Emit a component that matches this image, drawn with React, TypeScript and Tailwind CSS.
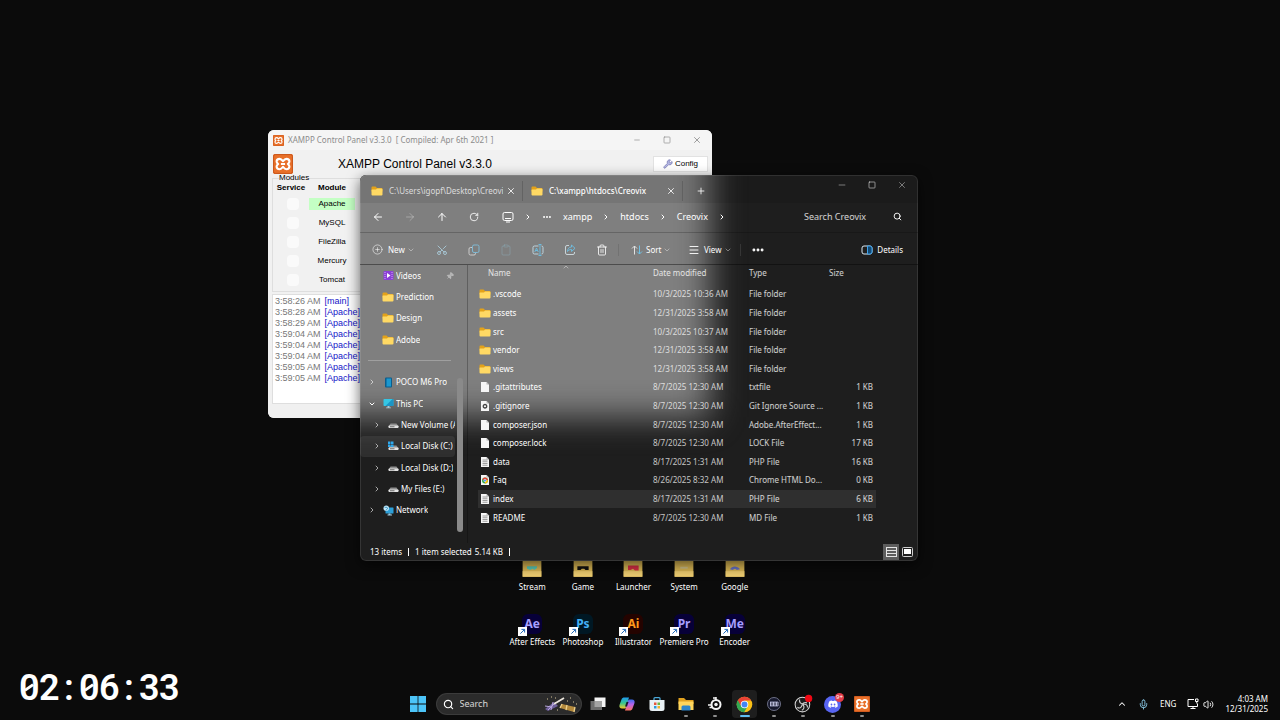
import clsx from "clsx";
import {
	ArrowLeft,
	ArrowRight,
	ArrowUp,
	ChevronDown,
	ChevronRight,
	ChevronUp,
	CirclePlus,
	Clipboard,
	Ellipsis,
	Menu,
	Mic,
	Minus,
	Pin,
	Plus,
	RotateCw,
	Scissors,
	Search,
	Square,
	Trash2,
	Volume2,
	Wrench,
	X,
} from "lucide-react";
import type { ReactNode } from "react";

type TreeItem = {
	label: string;
	icon: ReactNode;
	level?: number;
	open?: boolean;
	pinned?: boolean;
	selected?: boolean;
};

type FileKind = "folder" | "blank" | "gear" | "text" | "chrome";

type FileRow = {
	name: string;
	kind: FileKind;
	date: string;
	type: string;
	size?: string;
	selected?: boolean;
};

const files: FileRow[] = [
	{ name: ".vscode", kind: "folder", date: "10/3/2025 10:36 AM", type: "File folder" },
	{ name: "assets", kind: "folder", date: "12/31/2025 3:58 AM", type: "File folder" },
	{ name: "src", kind: "folder", date: "10/3/2025 10:37 AM", type: "File folder" },
	{ name: "vendor", kind: "folder", date: "12/31/2025 3:58 AM", type: "File folder" },
	{ name: "views", kind: "folder", date: "12/31/2025 3:58 AM", type: "File folder" },
	{ name: ".gitattributes", kind: "blank", date: "8/7/2025 12:30 AM", type: "txtfile", size: "1 KB" },
	{ name: ".gitignore", kind: "gear", date: "8/7/2025 12:30 AM", type: "Git Ignore Source ...", size: "1 KB" },
	{ name: "composer.json", kind: "blank", date: "8/7/2025 12:30 AM", type: "Adobe.AfterEffect...", size: "1 KB" },
	{ name: "composer.lock", kind: "blank", date: "8/7/2025 12:30 AM", type: "LOCK File", size: "17 KB" },
	{ name: "data", kind: "text", date: "8/17/2025 1:31 AM", type: "PHP File", size: "16 KB" },
	{ name: "Faq", kind: "chrome", date: "8/26/2025 8:32 AM", type: "Chrome HTML Do...", size: "0 KB" },
	{ name: "index", kind: "text", date: "8/17/2025 1:31 AM", type: "PHP File", size: "6 KB", selected: true },
	{ name: "README", kind: "text", date: "8/7/2025 12:30 AM", type: "MD File", size: "1 KB" },
];

const log = [
	["3:58:26 AM", "main"],
	["3:58:28 AM", "Apache"],
	["3:58:29 AM", "Apache"],
	["3:59:04 AM", "Apache"],
	["3:59:04 AM", "Apache"],
	["3:59:04 AM", "Apache"],
	["3:59:05 AM", "Apache"],
	["3:59:05 AM", "Apache"],
];

const modules = ["Apache", "MySQL", "FileZilla", "Mercury", "Tomcat"];

/* ---------- icons ---------- */

function FolderIcon({ className }: { className?: string }) {
	return (
		<svg viewBox="0 0 24 20" className={className} aria-hidden="true">
			<path d="M1 3a2 2 0 0 1 2-2h6l3 3h9a2 2 0 0 1 2 2v5H1z" fill="#e3a21a" />
			<path d="M1 8a1 1 0 0 1 1-1h8l2-2h9a2 2 0 0 1 2 2v10a2 2 0 0 1-2 2H3a2 2 0 0 1-2-2z" fill="#ffd964" />
		</svg>
	);
}

function XamppIcon({ className }: { className?: string }) {
	return (
		<svg viewBox="0 0 24 24" className={className} aria-hidden="true">
			<rect width="24" height="24" rx="2" fill="#e8702a" />
			<rect x=".7" y=".7" width="22.6" height="22.6" rx="2" fill="none" stroke="#c9561c" strokeWidth="1.2" />
			<path
				d="M8 5.800c-2.200 0-3.700 1.400-3.700 3.200 0 1.400.9 2.200 1.900 3-1 .8-1.900 1.600-1.900 3 0 1.800 1.500 3.200 3.700 3.200 1.900 0 2.700-1.100 4-2.800 1.300 1.700 2.100 2.800 4 2.800 2.200 0 3.700-1.400 3.700-3.200 0-1.400-.9-2.200-1.900-3 1-.8 1.900-1.600 1.900-3 0-1.800-1.500-3.200-3.700-3.200-1.900 0-2.700 1.100-4 2.800-1.300-1.700-2.100-2.800-4-2.800z"
				fill="none"
				stroke="#fff"
				strokeWidth="2.500"
				strokeLinejoin="round"
			/>
			<path d="M9.500 12h5" stroke="#fff" strokeWidth="2.500" />
		</svg>
	);
}

function ChromeIcon({ className }: { className?: string }) {
	return (
		<svg viewBox="0 0 24 24" className={className} aria-hidden="true">
			<circle cx="12" cy="12" r="11" fill="#fbc116" />
			<path d="M2.500 6.500A11 11 0 0 0 11.500 23l5-8.400L12 12z" fill="#34a853" />
			<path d="M12 6.500V12L7.200 14.700 2.500 6.500A11 11 0 0 1 21.500 6.500z" fill="#ea4335" />
			<path d="M2.500 6.500 7.200 14.700 12 23h-.5A11 11 0 0 1 2.500 6.500z" fill="#34a853" />
			<circle cx="12" cy="12" r="5.300" fill="#fff" />
			<circle cx="12" cy="12" r="4.200" fill="#4285f4" />
		</svg>
	);
}

function FileIcon({ kind }: { kind: FileKind }) {
	if (kind === "folder") return <FolderIcon className="h-2.5 w-3 shrink-0" />;
	return (
		<svg viewBox="0 0 16 20" className="mx-px h-2.5 w-2.5 shrink-0" aria-hidden="true">
			<path d="M0 0h11l5 5v15H0z" fill="#f6f6f6" />
			<path d="M11 0v5h5z" fill="#b5b5b5" />
			{kind === "text" && <path d="M3 6h10M3 9.500h10M3 13h10M3 16.500h10" stroke="#777" strokeWidth="1.400" />}
			{kind === "gear" && <circle cx="8" cy="10.500" r="3.500" fill="none" stroke="#444" strokeWidth="2.600" />}
			{kind === "chrome" && (
				<>
					<circle cx="8" cy="11" r="6" fill="#34a853" />
					<path d="M2.500 9A6 6 0 0 1 14 10H8z" fill="#ea4335" />
					<path d="M14 10a6 6 0 0 1-6 7v-6z" fill="#fbbc05" />
					<circle cx="8" cy="11" r="2.400" fill="#4285f4" stroke="#fff" />
				</>
			)}
		</svg>
	);
}

function VideosIcon() {
	return (
		<svg viewBox="0 0 22 22" className="size-[11px]" aria-hidden="true">
			<rect x="1" y="2" width="20" height="18" rx="2.500" fill="#8b3fd6" />
			<path d="M4 4v14M18 4v14" stroke="#d9b6ff" strokeWidth="1.800" strokeDasharray="2 2" />
			<path d="m8 6 7 5-7 5z" fill="#fff" />
		</svg>
	);
}

function PhoneIcon() {
	return (
		<svg viewBox="0 0 22 22" className="size-[11px]" aria-hidden="true">
			<rect x="4" y="1" width="14" height="20" rx="2" fill="#0b5d8c" />
			<rect x="7" y="3" width="9" height="16" fill="#1b98cf" />
		</svg>
	);
}

function PcIcon() {
	return (
		<svg viewBox="0 0 22 22" className="size-[11px]" aria-hidden="true">
			<rect x="1" y="2" width="20" height="14" rx="1.500" fill="#35c6e4" />
			<path d="M5 16 19 2h.5A1.500 1.500 0 0 1 21 3.500V14.500a1.500 1.500 0 0 1-1.500 1.500z" fill="#1688bd" opacity=".8" />
			<path d="M9 16h4v3H9zM6 19h10v1.500H6z" fill="#a9c7d4" />
		</svg>
	);
}

function DriveIcon({ system }: { system?: boolean }) {
	return (
		<svg viewBox="0 0 22 22" className="size-[11px]" aria-hidden="true">
			<path d="M5 9h12l4 6H1z" fill="#8d8d8d" />
			<rect x="1" y="13" width="20" height="5" rx="1.500" fill="#e2e2e2" />
			<path d="M4 15.500h9" stroke="#444" strokeWidth="1.500" />
			{system && <path d="M0 1h5v5H0zM6 1h5v5H6zM0 7h5v5H0zM6 7h5v5H6z" fill="#2ea9ee" />}
		</svg>
	);
}

function NetworkIcon() {
	return (
		<svg viewBox="0 0 22 22" className="size-[11px]" aria-hidden="true">
			<rect x="5" y="5" width="16" height="12" rx="1" fill="#2c9fd8" />
			<path d="M11 17h4v2h3v2H9v-2h2z" fill="#9fc9de" />
			<circle cx="6.500" cy="6.500" r="5.500" fill="#bfe6f7" />
			<path d="M3 4c2 2 5-1 6 2s-3 2-3 5" stroke="#2787b8" strokeWidth="1.700" fill="none" />
		</svg>
	);
}

const tree: (TreeItem | null)[] = [
	{ label: "Videos", icon: <VideosIcon />, pinned: true },
	{ label: "Prediction", icon: <FolderIcon className="h-2.5 w-3" /> },
	{ label: "Design", icon: <FolderIcon className="h-2.5 w-3" /> },
	{ label: "Adobe", icon: <FolderIcon className="h-2.5 w-3" /> },
	null,
	{ label: "POCO M6 Pro", icon: <PhoneIcon />, level: 0 },
	{ label: "This PC", icon: <PcIcon />, level: 0, open: true },
	{ label: "New Volume (A:)", icon: <DriveIcon />, level: 1 },
	{ label: "Local Disk (C:)", icon: <DriveIcon system />, level: 1, selected: true },
	{ label: "Local Disk (D:)", icon: <DriveIcon />, level: 1 },
	{ label: "My Files (E:)", icon: <DriveIcon />, level: 1 },
	{ label: "Network", icon: <NetworkIcon />, level: 0 },
];

/* ---------- XAMPP window ---------- */

function XamppWindow() {
	return (
		<section className="absolute top-[130px] left-[268px] flex h-[288px] w-[444px] flex-col overflow-hidden rounded-md bg-[#f1f1f1] font-['Liberation_Sans',sans-serif] text-black">
			<header className="flex h-5 items-center bg-[#f5f5f5] pl-[5px] font-['Noto_Sans',sans-serif] text-[8px] text-[#8c8c8c]">
				<XamppIcon className="mr-1 size-[11px]" />
				<span>XAMPP Control Panel v3.3.0</span>
				<span className="ml-1">[ Compiled: Apr 6th 2021 ]</span>
				<div className="ml-auto flex">
					<button type="button" aria-label="Minimize" className="grid w-[30px] place-items-center">
						<Minus className="size-2" />
					</button>
					<button type="button" aria-label="Maximize" className="grid w-[30px] place-items-center">
						<Square className="size-2" />
					</button>
					<button type="button" aria-label="Close" className="grid w-[30px] place-items-center">
						<X className="size-2.5" />
					</button>
				</div>
			</header>

			<div className="flex h-6 items-center pt-1 pr-1 pl-[5px]">
				<XamppIcon className="size-5" />
				<h1 className="ml-[45px] text-xs">XAMPP Control Panel v3.3.0</h1>
				<button
					type="button"
					className="ml-auto flex h-4 w-[55px] items-center justify-center gap-0.5 border border-[#e2e2e2] bg-white text-[8px]"
				>
					<Wrench className="size-2.5 fill-[#b6b8e6] text-[#7d80b5]" />
					Config
				</button>
			</div>

			<fieldset className="mx-1 h-[118px] border border-[#dedede] text-[8px]">
				<legend className="ml-1.5 h-2 leading-2">Modules</legend>
				<table className="w-[82px] text-center leading-4">
					<thead>
						<tr>
							<th className="h-[11px] w-9 leading-3">Service</th>
							<th className="leading-3">Module</th>
						</tr>
					</thead>
					<tbody>
						{modules.map((name) => (
							<tr key={name} className="h-[19px]">
								<td className="pl-1 align-middle">
									<input
										type="checkbox"
										aria-label={`${name} service`}
										className="mx-auto block size-3 appearance-none rounded-sm bg-[#fafafa]"
									/>
								</td>
								<td>
									<span className={clsx("block h-3 leading-3", name === "Apache" && "bg-[#c4ffc4]")}>{name}</span>
								</td>
							</tr>
						))}
					</tbody>
				</table>
			</fieldset>

			<div className="mx-1 mt-0.5 flex-1 border border-[#dedede] bg-white pl-0.5 text-[9px]">
				{log.map(([time, source], i) => (
					<p key={i} className="flex h-[11px] items-center gap-1 pt-0.5 text-[#1414c8]">
						<span className="text-[#777]">{time}</span>
						<span>[{source}]</span>
					</p>
				))}
			</div>
			<footer className="h-3.5 bg-[#f0f0f0]" />
		</section>
	);
}

/* ---------- Explorer window ---------- */

function Tab({ title, active }: { title: string; active?: boolean }) {
	return (
		<div
			className={clsx(
				"mt-1.5 mb-0.5 flex w-[160px] items-center border-r border-black/15 pr-1.5 pl-2",
				active ? "text-white" : "text-white/75",
			)}
		>
			<FolderIcon className="mr-1.5 h-2.5 w-3 shrink-0" />
			<span className={clsx("w-[114px] overflow-hidden whitespace-nowrap", active && "font-medium")}>{title}</span>
			<button type="button" aria-label="Close tab" className="ml-auto">
				<X className="size-2.5 text-white" />
			</button>
		</div>
	);
}

function Crumb({ children }: { children: string }) {
	return (
		<>
			<a href="#path" className="text-white">
				{children}
			</a>
			<ChevronRight className="mx-2.5 size-2" strokeWidth={3} />
		</>
	);
}

function ToolButton({ label, children }: { label: string; children: ReactNode }) {
	return (
		<button type="button" aria-label={label} className="grid w-8 place-items-center">
			{children}
		</button>
	);
}

function TreeRow({ item }: { item: TreeItem }) {
	const Chevron = item.open ? ChevronDown : ChevronRight;
	return (
		<li
			className={clsx(
				"flex flex-1 items-center gap-0.5",
				item.level === 1 ? "pl-[13px]" : "pl-2",
				item.selected && "rounded-sm bg-white/8",
			)}
		>
			<span className="mr-1.5 w-2 shrink-0">
				{item.level !== undefined && (
					<Chevron className={clsx("size-2", item.open ? "text-white" : "text-white/60")} strokeWidth={3} />
				)}
			</span>
			<span className="-ml-0.5 grid w-3 shrink-0 place-items-center">{item.icon}</span>
			<span className="overflow-hidden whitespace-nowrap">{item.label}</span>
			{item.pinned && <Pin className="mr-px ml-auto size-2 rotate-45 fill-white/40 text-white/40" />}
		</li>
	);
}

function FileTable() {
	return (
		<table className="ml-2.5 h-[262px] w-[398px] table-fixed text-left leading-4 whitespace-nowrap">
			<thead>
				<tr className="h-5 align-top text-white/80">
					<th className="relative w-[172px] pl-2.5 font-normal">
						Name
						<ChevronUp className="absolute -top-0.5 left-[84px] size-2 text-white/60" />
					</th>
					<th className="w-24 pl-[3px] font-normal">Date modified</th>
					<th className="w-20 pl-[3px] font-normal">Type</th>
					<th className="pl-[3px] font-normal">Size</th>
				</tr>
			</thead>
			<tbody>
				{files.map((file) => (
					<tr key={file.name} className={clsx(file.selected && "bg-white/8")}>
						<td className="p-0">
							<span className="flex items-center gap-0.5 pl-px text-white">
								<FileIcon kind={file.kind} />
								{file.name}
							</span>
						</td>
						<td className="pl-[3px] text-white/75">{file.date}</td>
						<td className="pl-[3px] text-white/80">{file.type}</td>
						<td className="pr-[3px] text-right text-white/80">{file.size}</td>
					</tr>
				))}
			</tbody>
		</table>
	);
}

function ExplorerWindow() {
	return (
		<section className="absolute top-[175px] left-[360px] h-[386px] w-[558px] overflow-hidden rounded-md bg-[#1e1e1e] text-[8px] text-white shadow-[0_4px_14px_rgba(0,0,0,0.6)]">
			{/* acrylic tint from the bright window underneath */}
			<div className="absolute -top-20 -left-20 h-[322px] w-[430px] bg-[#7f7f7f] blur-lg" />
			<div className="absolute inset-0 rounded-md border border-white/10" />

			<div className="relative flex h-full flex-col">
				<header className="flex h-7 bg-black/8 pl-[3px]">
					<Tab title="C:\Users\igopf\Desktop\Creovix" />
					<Tab title="C:\xampp\htdocs\Creovix" active />
					<button type="button" aria-label="New tab" className="grid w-9 place-items-center pt-1">
						<Plus className="size-2.5" />
					</button>
					<div className="ml-auto flex pr-px pb-2 text-white/50">
						<button type="button" aria-label="Minimize" className="grid w-[30px] place-items-center">
							<Minus className="size-2.5" />
						</button>
						<button type="button" aria-label="Maximize" className="grid w-[30px] place-items-center">
							<Square className="size-2" strokeWidth={3} />
						</button>
						<button type="button" aria-label="Close" className="grid w-[30px] place-items-center">
							<X className="size-2.5" />
						</button>
					</div>
				</header>

				<nav className="flex h-[30px] items-center border-b border-black/20 pb-0.5 pl-0.5 text-[9px]">
					<ToolButton label="Back">
						<ArrowLeft className="size-3" />
					</ToolButton>
					<ToolButton label="Forward">
						<ArrowRight className="size-3 text-white/30" />
					</ToolButton>
					<ToolButton label="Up">
						<ArrowUp className="size-3" />
					</ToolButton>
					<ToolButton label="Refresh">
						<RotateCw className="size-2.5" />
					</ToolButton>
					<svg viewBox="0 0 24 24" className="ml-3 size-3" fill="none" stroke="currentColor" strokeWidth="2" aria-hidden="true">
						<rect x="2" y="3" width="20" height="16" rx="3" />
						<path d="M8 22h8M6 15h12" />
					</svg>
					<ChevronRight className="mx-2.5 size-2" strokeWidth={3} />
					<Ellipsis className="mr-[11px] size-2.5" strokeWidth={3} />
					<Crumb>xampp</Crumb>
					<Crumb>htdocs</Crumb>
					<Crumb>Creovix</Crumb>
					<label className="mr-4 ml-auto flex items-center">
						<input
							type="text"
							aria-label="Search Creovix"
							placeholder="Search Creovix"
							className="w-[89px] bg-transparent placeholder:text-white/80"
						/>
						<Search className="size-[9px]" strokeWidth={2.5} />
					</label>
				</nav>

				<div className="flex h-8 items-center border-b border-black/40 pt-0.5">
					<button type="button" className="flex w-[66px] items-center pl-3">
						<CirclePlus className="mr-[5px] size-[11px] text-white/80" strokeWidth={1.5} />
						New
						<ChevronDown className="ml-0.5 size-2 text-white/60" />
					</button>
					<ToolButton label="Cut">
						<Scissors className="size-3 -rotate-90 text-[#a9cbd9]" strokeWidth={1.8} />
					</ToolButton>
					<ToolButton label="Copy">
						<svg viewBox="0 0 24 24" className="size-3" fill="none" strokeWidth="1.8" aria-hidden="true">
							<path d="M8 7H5a3 3 0 0 0-3 3v9a3 3 0 0 0 3 3h7a3 3 0 0 0 3-3v-1" stroke="#d5d5d5" />
							<rect x="9" y="2" width="13" height="15" rx="3" stroke="#7fc0dc" />
						</svg>
					</ToolButton>
					<ToolButton label="Paste">
						<Clipboard className="size-3 text-[#8fb4c4]/50" strokeWidth={1.5} />
					</ToolButton>
					<ToolButton label="Rename">
						<svg viewBox="0 0 24 24" className="size-3" fill="none" strokeWidth="1.8" aria-hidden="true">
							<path d="M13 4H5a3 3 0 0 0-3 3v10a3 3 0 0 0 3 3h8M19 4a3 3 0 0 1 3 3v10a3 3 0 0 1-3 3" stroke="#c4dde8" />
							<path d="M16 1v22M13 1h6M13 23h6M5.500 16 9 8l3.500 8M7 13h4" stroke="#6cc0e4" />
						</svg>
					</ToolButton>
					<ToolButton label="Share">
						<svg viewBox="0 0 24 24" className="size-3" fill="none" strokeWidth="1.8" aria-hidden="true">
							<path d="M10 3H6a3 3 0 0 0-3 3v12a3 3 0 0 0 3 3h12a3 3 0 0 0 3-3v-2" stroke="#d0dde2" />
							<path d="M15 2l7 6.500-7 6.500v-4c-4 0-6 1-8 4 0-5 3-9 8-9z" stroke="#6cc0e4" />
						</svg>
					</ToolButton>
					<ToolButton label="Delete">
						<Trash2 className="size-3 text-white/90" strokeWidth={1.8} />
					</ToolButton>
					<button type="button" className="flex w-[59px] items-center border-l border-black/10 pl-3">
						<svg viewBox="0 0 24 24" className="mr-[3px] size-3" fill="none" strokeWidth="2" aria-hidden="true">
							<path d="M7 21V4M2 9l5-5 5 5" stroke="#e2e2e2" />
							<path d="M17 3v17M12 15l5 5 5-5" stroke="#6cc0e4" />
						</svg>
						Sort
						<ChevronDown className="ml-0.5 size-2 text-white/60" />
					</button>
					<button type="button" className="flex w-16 items-center border-r border-white/10 pl-[11px]">
						<Menu className="mr-1 size-3" strokeWidth={1.8} />
						View
						<ChevronDown className="ml-0.5 size-2 text-white/60" />
					</button>
					<button type="button" aria-label="More" className="grid w-[34px] place-items-center">
						<Ellipsis className="size-3.5" strokeWidth={3} />
					</button>
					<button type="button" className="mr-[15px] ml-auto flex items-center gap-1">
						<svg viewBox="0 0 24 20" className="h-2.5 w-3" fill="none" aria-hidden="true">
							<rect x="2" y="2" width="20" height="16" rx="4" stroke="#d8e8f2" strokeWidth="2" />
							<path d="M13 2h5a4 4 0 0 1 4 4v8a4 4 0 0 1-4 4h-5z" stroke="#3fa2ea" strokeWidth="2" fill="#134a75" />
						</svg>
						Details
					</button>
				</div>

				<div className="flex flex-1">
					<aside className="relative w-[108px] border-r border-black/25">
						<ul className="flex h-64 flex-col pr-3">
							{tree.map((item) =>
								item ? (
									<TreeRow key={item.label} item={item} />
								) : (
									<li key="divider" className="flex flex-1 items-center pr-1 pl-2">
										<hr className="w-full border-white/25" />
									</li>
								),
							)}
						</ul>
						{/* scrollbar thumb */}
						<div className="absolute top-[113px] right-1 h-[154px] w-1.5 rounded-full bg-[#8a8a8a]" />
					</aside>
					<FileTable />
				</div>

				<footer className="flex h-[18px] items-center pr-[3px] pl-2.5">
					<span>13 items</span>
					<span className="mx-1.5 h-2 w-px bg-white" />
					<span className="mr-[3px]">1 item selected</span>
					<span>5.14 KB</span>
					<span className="mx-1.5 h-2 w-px bg-white" />
					<div className="ml-auto flex items-center">
						<button type="button" aria-label="Details view" className="grid size-4 place-items-center bg-[#5d5d5d]">
							<svg viewBox="0 0 11 10" className="h-2.5 w-[11px]" aria-hidden="true">
								<path d="M0 .5h11M0 3.500h11M0 6.500h11M0 9.500h11M.5 0v10M10.500 0v10" stroke="#e4e4e4" />
							</svg>
						</button>
						<button type="button" aria-label="Thumbnail view" className="grid size-4 place-items-center">
							<svg viewBox="0 0 11 10" className="h-2.5 w-[11px]" aria-hidden="true">
								<rect x=".5" y=".5" width="10" height="9" rx="1" fill="none" stroke="#d0d0d0" />
								<rect x="2" y="2" width="7" height="5" fill="#fff" />
							</svg>
						</button>
					</div>
				</footer>
			</div>
		</section>
	);
}

/* ---------- desktop ---------- */

const folders = [
	{ name: "Stream", art: <path d="M8 8h16v3l-4 3-3-2-4 2-5-2z" fill="#58cdbb" /> },
	{ name: "Game", art: <path d="M7 8h18v6h-5l-2-2h-4l-2 2H7z" fill="#111" /> },
	{ name: "Launcher", art: <path d="M8 7h17v8h-6l-3-3-4 2H8z" fill="#d82e45" /> },
	{ name: "System", art: <path d="M10 9h12v3H10z" fill="#d3c48d" /> },
	{ name: "Google", art: <path d="M8 13c3-6 12-6 16 0l-5 1-3-2-4 2z" fill="#6773c9" /> },
];

const apps = [
	{ name: "After Effects", short: "Ae", tone: "bg-[#070038] text-[#a7a0ff]" },
	{ name: "Photoshop", short: "Ps", tone: "bg-[#001824] text-[#43b0f5]" },
	{ name: "Illustrator", short: "Ai", tone: "bg-[#240300] text-[#ff9a1c]" },
	{ name: "Premiere Pro", short: "Pr", tone: "bg-[#070038] text-[#a59cff]" },
	{ name: "Encoder", short: "Me", tone: "bg-[#070038] text-[#a59cff]" },
];

function DesktopIcons() {
	return (
		<div className="absolute top-[559px] left-[507px] grid w-[253px] grid-cols-5 gap-y-[21px] text-center text-[8px] leading-3 whitespace-nowrap text-white">
			{folders.map(({ name, art }) => (
				<a key={name} href="#folder" className="flex flex-col items-center gap-1">
					<svg viewBox="0 0 32 28" className="h-[18px] w-5" aria-hidden="true">
						<path d="M1 0h30v28H1z" fill="#dcb955" />
						<path d="M1 19h30v9H1z" fill="#eccb70" />
						<g transform="translate(0 3)">{art}</g>
					</svg>
					<span>{name}</span>
				</a>
			))}
			{apps.map(({ name, short, tone }) => (
				<a key={name} href="#app" className="flex flex-col items-center gap-0.5">
					<span className={clsx("relative grid size-5 place-items-center rounded-md text-xs font-bold", tone)}>
						{short}
						<span className="absolute -bottom-0.5 -left-1 grid size-[9px] place-items-center bg-white">
							<svg viewBox="0 0 10 10" className="size-[7px]" fill="none" aria-hidden="true">
								<path d="M2 8l5.500-5.500M3.500 2H8v4.500" stroke="#1b64b5" strokeWidth="1.400" />
							</svg>
						</span>
					</span>
					<span>{name}</span>
				</a>
			))}
		</div>
	);
}

function Recorder() {
	return (
		<div className="absolute bottom-3 left-[19px] flex font-['Roboto',sans-serif] text-4xl leading-10 font-semibold text-white">
			{"02:06:33".split("").map((char, i) => (
				<span key={i} className="relative w-5 text-center">
					{char}
					{char === "0" && (
						<span className="absolute top-[18px] left-[5px] h-[3px] w-2.5 -rotate-[35deg] bg-white" />
					)}
				</span>
			))}
		</div>
	);
}

/* ---------- taskbar ---------- */

const taskbarApps: { name: string; running?: boolean; active?: boolean; icon: ReactNode }[] = [
	{
		name: "Task View",
		icon: (
			<svg viewBox="0 0 32 32" className="size-4" aria-hidden="true">
				<path d="M9 3h22v19H9z" fill="#f4f4f4" />
				<path d="M1 10h23v18H1z" fill="#6d6d6d" />
				<path d="M9 10h15v12H9z" fill="#a3a3a3" />
			</svg>
		),
	},
	{
		name: "Copilot",
		icon: (
			<svg viewBox="0 0 32 32" className="size-4" aria-hidden="true">
				<defs>
					<linearGradient id="cpl" x1="0" y1="0" x2="0" y2="1">
						<stop offset="0" stopColor="#1f9bf0" />
						<stop offset=".5" stopColor="#35c58f" />
						<stop offset="1" stopColor="#f3c929" />
					</linearGradient>
					<linearGradient id="cpr" x1="0" y1="0" x2="0" y2="1">
						<stop offset="0" stopColor="#3b6df0" />
						<stop offset=".45" stopColor="#b763ea" />
						<stop offset="1" stopColor="#ff7360" />
					</linearGradient>
				</defs>
				<path d="M11 3h9l-5 17c-1 4-2 5-5 5H6c-4 0-6-3-5-7l4-11c1-3 3-4 6-4z" fill="url(#cpl)" />
				<path d="M21 29h-9l5-17c1-4 2-5 5-5h4c4 0 6 3 5 7l-4 11c-1 3-3 4-6 4z" fill="url(#cpr)" />
				<path d="M15 12h4l-3 9h-4z" fill="#17182a" />
			</svg>
		),
	},
	{
		name: "Microsoft Store",
		icon: (
			<svg viewBox="0 0 32 32" className="size-4" aria-hidden="true">
				<path d="M10 9V5a2 2 0 0 1 2-2h8a2 2 0 0 1 2 2v4" fill="none" stroke="#4aa8d8" strokeWidth="2.500" />
				<path d="M1 8h30v17a5 5 0 0 1-5 5H6a5 5 0 0 1-5-5z" fill="#e9f1f5" />
				<path d="M10 13h5v5h-5z" fill="#e8563a" />
				<path d="M17 13h5v5h-5z" fill="#6fb53b" />
				<path d="M10 20h5v5h-5z" fill="#2c9bdb" />
				<path d="M17 20h5v5h-5z" fill="#f2b52a" />
			</svg>
		),
	},
	{
		name: "File Explorer",
		running: true,
		icon: (
			<svg viewBox="0 0 32 32" className="size-4" aria-hidden="true">
				<path d="M1 4h11l4 4h15v8H1z" fill="#e2a21f" />
				<path d="M1 11h30v17H1z" fill="#ffd65c" />
				<path d="M7 22a3 3 0 0 1 3-3h12a3 3 0 0 1 3 3v7H7z" fill="#2e86c9" />
			</svg>
		),
	},
	{
		name: "SteelSeries GG",
		running: true,
		icon: (
			<svg viewBox="0 0 32 32" className="size-4" fill="none" aria-hidden="true">
				<circle cx="18" cy="17" r="9" stroke="#f5f5f5" strokeWidth="4" />
				<circle cx="18" cy="17" r="3.500" fill="#f5f5f5" />
				<path d="M2 18h8M5 23h7" stroke="#f5f5f5" strokeWidth="3" />
				<path d="M18 2v6M12 4h5" stroke="#f5f5f5" strokeWidth="3" />
			</svg>
		),
	},
	{ name: "Google Chrome", running: true, active: true, icon: <ChromeIcon className="size-[17px]" /> },
	{
		name: "Wave Link",
		running: true,
		icon: (
			<svg viewBox="0 0 32 32" className="size-4" aria-hidden="true">
				<circle cx="16" cy="16" r="13" fill="#17192d" stroke="#8a8da8" strokeWidth="1.500" />
				<path d="M8 12h16M8 20h16" stroke="#b8bce0" strokeWidth="1.500" />
				<path d="M9 12v8M12 12v8M15 12v8M18 12v8M21 12v8M24 12v8" stroke="#c8cbe8" strokeWidth="1.800" />
			</svg>
		),
	},
	{
		name: "OBS Studio",
		running: true,
		icon: (
			<svg viewBox="0 0 32 32" className="size-[18px] overflow-visible" fill="none" aria-hidden="true">
				<circle cx="15" cy="17" r="13" fill="#1c1c1c" stroke="#d6d6d6" strokeWidth="1.800" />
				<path d="M10 8c-1 5 2 8 7 8 4 0 7 2 7 6M23 14c-5-2-8 1-9 5-1 4-4 5-8 3M14 27c4-2 5-6 2-10" stroke="#cfcfcf" strokeWidth="2" />
				<circle cx="26" cy="6" r="6.500" fill="#f00814" />
			</svg>
		),
	},
	{
		name: "Discord",
		running: true,
		icon: (
			<span className="relative grid size-[17px] place-items-center rounded-full bg-[#5865f2]">
				<svg viewBox="0 0 24 18" className="h-2 w-2.5" aria-hidden="true">
					<path
						d="M20 2a19 19 0 0 0-5-1.500l-.7 1.400a18 18 0 0 0-4.600 0L9 .5A19 19 0 0 0 4 2C1 6 .3 10.500.7 15a19 19 0 0 0 5.800 3l1.300-2-2-1 .5-.4a13.500 13.500 0 0 0 11.400 0l.5.4-2 1 1.300 2a19 19 0 0 0 5.800-3C23.800 10 22.500 5.800 20 2zM8.300 12.500c-1.200 0-2.100-1-2.100-2.300s.9-2.300 2.100-2.300 2.100 1 2.100 2.300-.9 2.300-2.100 2.300zm7.400 0c-1.200 0-2.100-1-2.100-2.300s.9-2.300 2.100-2.300 2.100 1 2.100 2.300-.9 2.300-2.100 2.300z"
						fill="#fff"
					/>
				</svg>
				<span className="absolute -top-[3px] -right-[3px] grid size-[9px] place-items-center rounded-full bg-[#e23c48] text-[6px] leading-none text-white">
					9+
				</span>
			</span>
		),
	},
	{ name: "XAMPP", running: true, icon: <XamppIcon className="size-4" /> },
];

function Taskbar() {
	return (
		<footer className="grid h-8 grid-cols-[1fr_auto_1fr] items-center text-[8px] text-white">
			<div />
			<div className="flex items-center">
				<button type="button" aria-label="Start" className="grid h-8 w-[29px] place-items-center">
					<svg viewBox="0 0 16 16" className="size-4" aria-hidden="true">
						<path d="M0 0h7.600v7.600H0zM8.400 0H16v7.600H8.400zM0 8.400h7.600V16H0zM8.400 8.400H16V16H8.400z" fill="#4cc4f8" />
					</svg>
				</button>
				<label className="mr-0.5 ml-[3px] flex h-[22px] w-[146px] items-center rounded-full border border-white/8 bg-[#2b2b2b] pr-0.5 pl-1.5">
					<Search className="mr-1.5 size-[11px]" strokeWidth={2.5} />
					<input
						type="text"
						aria-label="Search"
						placeholder="Search"
						className="w-0 flex-1 bg-transparent text-[9px] placeholder:text-white/80"
					/>
					<svg viewBox="0 0 36 18" className="h-[18px] w-9" fill="none" aria-hidden="true">
						<path d="m2 14 9-7 4 4-10 5z" fill="#6e5f99" />
						<path d="m5 15 8-8M2 11l7 1M8 15l2-8" stroke="#b7a6dc" />
						<path d="m11 9 10-6" stroke="#ece6dd" strokeWidth="1.800" />
						<path d="m19 9 13 3-1 5-14-4z" fill="#b48a3d" />
						<path d="m19 9-2 4M24 10l-1 5M32 12l-1 5" stroke="#f0d28c" strokeWidth="1.300" />
						<path d="M4 4h1M8 2h1M14 15h1M27 3h1M30 7h1M24 6h1M33 9h1M12 3h1" stroke="#d9c89b" />
					</svg>
				</label>
				<div className="grid w-[293px] grid-cols-10">
					{taskbarApps.map((app) => (
						<button
							key={app.name}
							type="button"
							aria-label={app.name}
							className={clsx("relative mx-0.5 grid h-7 place-items-center rounded", app.active && "bg-white/8")}
						>
							{app.icon}
							{app.running && (
								<span
									className={clsx(
										"absolute bottom-px h-0.5 rounded-full",
										app.active ? "w-2.5 bg-[#5fbdf0]" : "w-1 bg-[#8d8d8d]",
									)}
								/>
							)}
						</button>
					))}
				</div>
			</div>
			<div className="flex items-center justify-end pr-3">
				<ChevronUp className="mr-[11px] size-2.5" strokeWidth={2.5} />
				<Mic className="mr-[11px] size-[11px] text-[#8fd0ec]" />
				<span className="mr-[11px]">ENG</span>
				<svg viewBox="0 0 24 24" className="mr-1 size-3" fill="none" stroke="currentColor" strokeWidth="2" aria-hidden="true">
					<path d="M14 3H2v14h19v-6M7 21h10M12 17v4" />
					<path d="M17 2h5v5h-5zM19.500 7v4" />
				</svg>
				<Volume2 className="mr-[11px] size-[11px]" />
				<div className="text-right leading-[10px]">
					<p>4:03 AM</p>
					<p>12/31/2025</p>
				</div>
			</div>
		</footer>
	);
}

export default function App() {
	return (
		<div className="relative flex h-screen flex-col overflow-hidden bg-[#0b0b0b] font-['Noto_Sans',sans-serif]">
			<main className="flex-1">
				<DesktopIcons />
				<XamppWindow />
				<ExplorerWindow />
			</main>
			<Recorder />
			<Taskbar />
		</div>
	);
}
